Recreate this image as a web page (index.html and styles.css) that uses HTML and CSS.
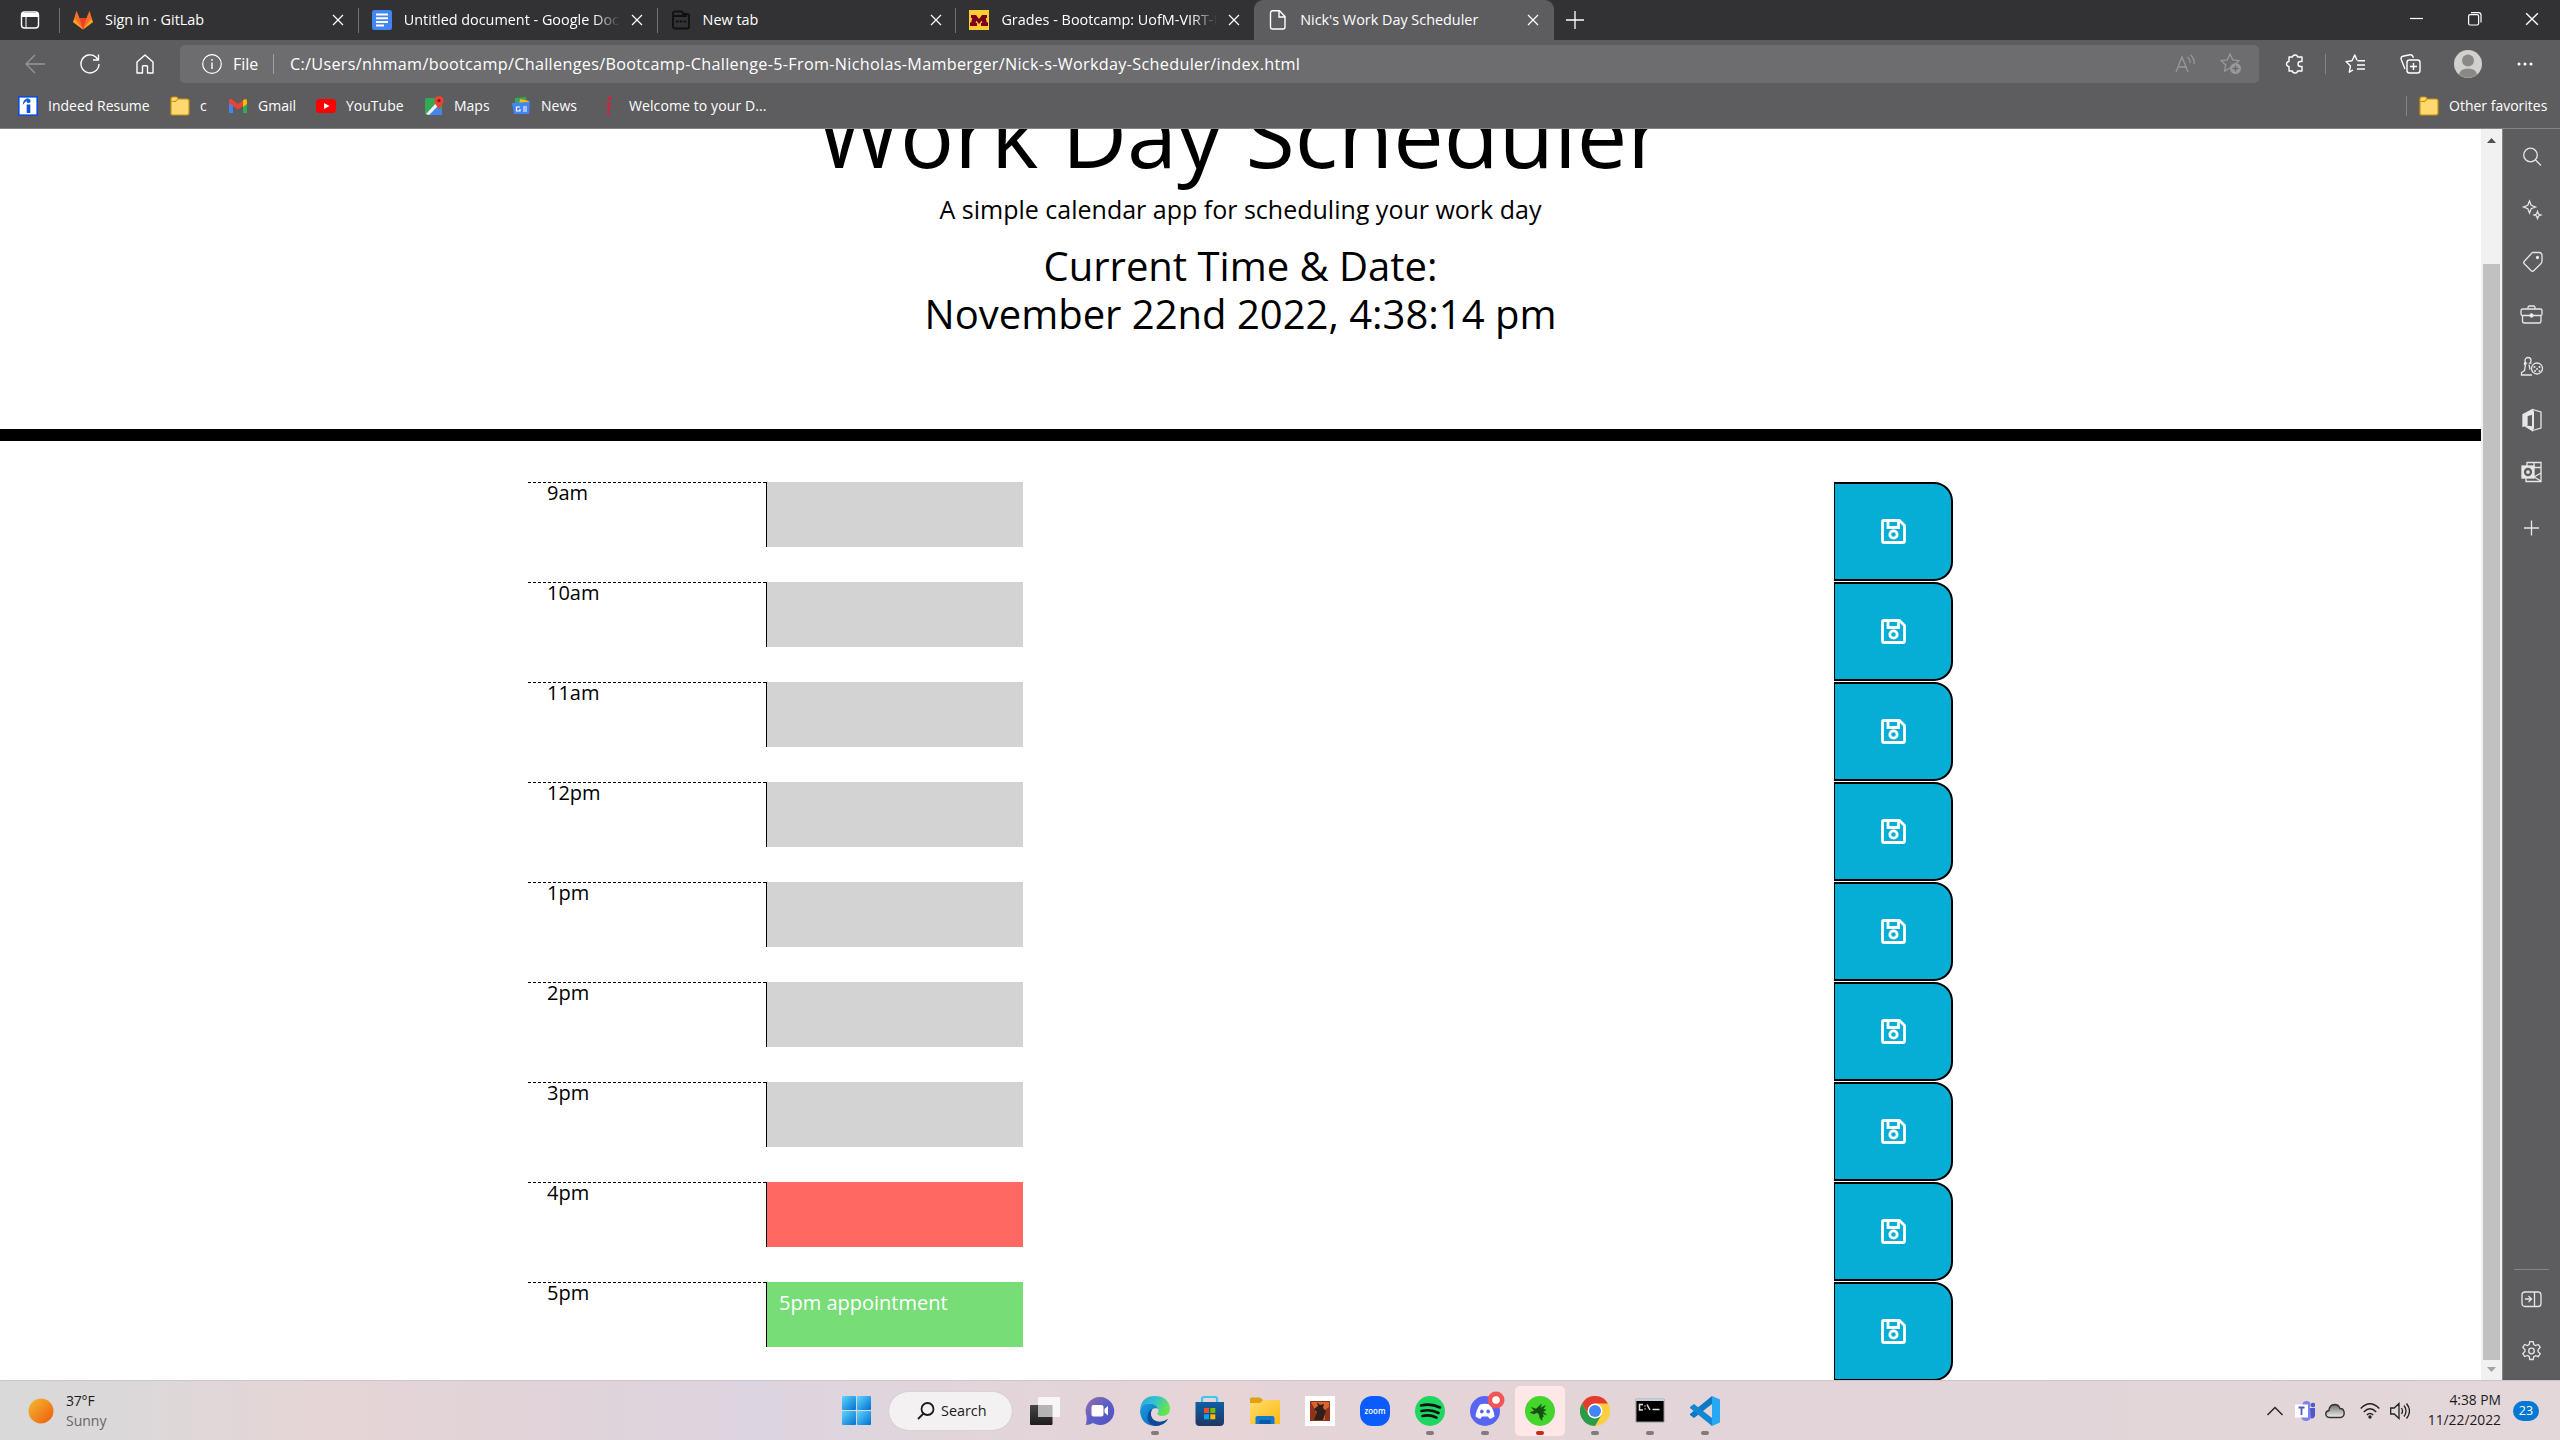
FILE: index.html
```html
<!DOCTYPE html>
<html lang="en">
<head>
<meta charset="utf-8">
<title>Nick's Work Day Scheduler</title>
<link rel="stylesheet" href="styles.css">
</head>
<body>
<svg class="defs" aria-hidden="true">
  <defs>
    <linearGradient id="win" x1="0" y1="0" x2="1" y2="1"><stop offset="0" stop-color="#5fd6ff"/><stop offset="1" stop-color="#0070d0"/></linearGradient>
    <linearGradient id="sun" x1="0" y1="0" x2="1" y2="1"><stop offset="0" stop-color="#f3bd32"/><stop offset="1" stop-color="#ee5a0c"/></linearGradient>
    <linearGradient id="dark" x1="0" y1="0" x2="0" y2="1"><stop offset="0" stop-color="#454545"/><stop offset="1" stop-color="#1d1d1d"/></linearGradient>
    <linearGradient id="chat" x1="0" y1="0" x2="1" y2="1"><stop offset="0" stop-color="#9a6fa8"/><stop offset=".5" stop-color="#5b5fc7"/><stop offset="1" stop-color="#5050c0"/></linearGradient>
    <linearGradient id="edgeTop" x1="0" y1="0" x2="1" y2=".4"><stop offset="0" stop-color="#28a5dc"/><stop offset=".5" stop-color="#2fc3cf"/><stop offset="1" stop-color="#66e54e"/></linearGradient>
    <linearGradient id="edgeLow" x1="0" y1="0" x2="1" y2="1"><stop offset="0" stop-color="#1b9de2"/><stop offset="1" stop-color="#0a5bb5"/></linearGradient>
    <linearGradient id="store" x1="0" y1="0" x2="0" y2="1"><stop offset="0" stop-color="#0f5fa5"/><stop offset="1" stop-color="#1f3763"/></linearGradient>
    <linearGradient id="folderBig" x1="0" y1="0" x2="1" y2="1"><stop offset="0" stop-color="#ffdc6b"/><stop offset="1" stop-color="#fdb913"/></linearGradient>
    <linearGradient id="cloud" x1="0" y1="0" x2="0" y2="1"><stop offset="0" stop-color="#6e6e6e"/><stop offset="1" stop-color="#efefef"/></linearGradient>
    <symbol id="x" viewBox="0 0 12 12"><path d="M1 1l10 10M11 1L1 11" stroke="#fff" stroke-width="1.2" fill="none"/></symbol>
    <symbol id="folder" viewBox="0 0 20 20"><path d="M1 18V3q0-2 2-2h3q2 0 2 2h9q2 0 2 2v12q0 2-2 2H3q-2 0-2-1z" fill="#ffd970" stroke="#c79312" stroke-width="1.2"/><path d="M1.5 5.500h4.500L8 3" fill="#f2bf2e" stroke="#c79312"/></symbol>
    <symbol id="save" viewBox="0 0 25 25"><path d="M3 1.500h15.500l5 5V22q0 1.500-1.500 1.500H3Q1.500 23.500 1.500 22V3Q1.500 1.500 3 1.500z" fill="none" stroke="#fff" stroke-width="2.800" stroke-linejoin="round"/><path d="M7 2v6.500h10.500V2" fill="none" stroke="#fff" stroke-width="2.800"/><circle cx="12.500" cy="15.500" r="3.700" fill="none" stroke="#fff" stroke-width="2.800"/></symbol>
  </defs>
</svg>

<header class="browser">
  <div class="tabstrip">
    <div class="tab-actions"><svg width="20" height="20" viewBox="0 0 20 20"><rect x="1.500" y="2" width="17" height="16" rx="3" fill="none" stroke="#fff" stroke-width="1.400"/><path d="M2 3h16v4H2z" fill="#fff"/><path d="M6 6v12" stroke="#fff"/></svg></div>
    <div class="tab">
      <svg class="fav" viewBox="0 0 20 20"><path d="M10 19.500L0 12 3.500.8 6.500 8h7L16.500.8 20 12z" fill="#fc6d26"/><path d="M10 19.500L6.500 8h7z" fill="#e24329"/><path d="M0 12l10 7.500L2 9zM20 12l-10 7.500L18 9z" fill="#fca326"/></svg>
      <span class="title">Sign in · GitLab</span><svg class="close"><use href="#x"/></svg>
    </div>
    <div class="tab">
      <svg class="fav" viewBox="0 0 20 20"><rect width="20" height="20" rx="2.500" fill="#4285f4"/><path d="M4 4.500h12M4 8.300h12M4 12h12M4 15.500h8" stroke="#fff" stroke-width="1.900"/></svg>
      <span class="title faded">Untitled document - Google Docs</span><svg class="close"><use href="#x"/></svg>
    </div>
    <div class="tab">
      <svg class="fav" viewBox="0 0 20 20"><path d="M4 1.500h6q2 0 2 2.500h4q2 0 2 2v10.500q0 2-2 2H4q-2 0-2-2V3.500q0-2 2-2zM2 6h14" fill="none" stroke="#101010" stroke-width="1.800"/><path d="M5 11.500h2.500m1.300 0h2.500m1.300 0h2.500" stroke="#101010" stroke-width="2.200"/></svg>
      <span class="title">New tab</span><svg class="close"><use href="#x"/></svg>
    </div>
    <div class="tab">
      <svg class="fav" viewBox="0 0 20 20"><rect width="20" height="20" fill="#ffcc33"/><path d="M2 5h5l3 4 3-4h5v3h-1.200l1 4.500H19V16h-7v-3h1.200L13 10.500 10 14l-3-3.500-.2 2.500H8v3H1v-3.500h1.200l1-4.500H2z" fill="#7a0019"/></svg>
      <span class="title faded">Grades - Bootcamp: UofM-VIRT-F</span><svg class="close"><use href="#x"/></svg>
    </div>
    <div class="tab active">
      <svg class="fav" viewBox="0 0 20 20"><path d="M4.500.8h7L17 6.500V17q0 2-2 2H4.500q-2 0-2-2V3q0-2.200 2-2.200zM11 1v6h6" fill="none" stroke="#fff" stroke-width="1.400"/></svg>
      <span class="title">Nick's Work Day Scheduler</span><svg class="close"><use href="#x"/></svg>
    </div>
    <svg class="newtab" viewBox="0 0 18 18"><path d="M9 0v18M0 9h18" stroke="#fff" stroke-width="1.300"/></svg>
    <div class="window-buttons">
      <svg width="14" height="14"><path d="M0 6.500h13" stroke="#fff" stroke-width="1.200"/></svg>
      <svg width="14" height="14"><rect x=".6" y="2.600" width="10" height="10.400" rx="1.500" fill="none" stroke="#fff" stroke-width="1.200"/><path d="M3 .6h7.500q2.500 0 2.500 2.500v7.500" fill="none" stroke="#fff" stroke-width="1.200"/></svg>
      <svg width="14" height="14" viewBox="0 0 12 12"><use href="#x"/></svg>
    </div>
  </div>

  <div class="toolbar">
    <svg class="nav-ico" viewBox="0 0 20 20"><path d="M20 10H1M10 1L1 10l9 9" fill="none" stroke="#98989a" stroke-width="1.300"/></svg>
    <svg class="nav-ico" viewBox="0 0 20 20"><path d="M19 10a9 9 0 1 1-3-6.800L18.500 6M18.500.5V6H13" fill="none" stroke="#fff" stroke-width="1.400"/></svg>
    <svg class="nav-ico" viewBox="0 0 20 20"><path d="M2 8l8-7 8 7v11h-5.500v-6.500q0-.8-.8-.8H8.300q-.8 0-.8.8V19H2z" fill="none" stroke="#fff" stroke-width="1.400" stroke-linejoin="round"/></svg>
    <div class="address">
      <svg width="20" height="20"><circle cx="10" cy="10" r="9.300" fill="none" stroke="#fff" stroke-width="1.200"/><path d="M10 8.500V15M10 5v1.700" stroke="#fff" stroke-width="1.400"/></svg>
      <span class="scheme">File</span>
      <span class="url">C:/Users/nhmam/bootcamp/Challenges/Bootcamp-Challenge-5-From-Nicholas-Mamberger/Nick-s-Workday-Scheduler/index.html</span>
      <svg class="read" width="20" height="20"><path d="M1 18L7 3l6 15M3.500 13h7M12.500 3q3 2.500 2.500 6M15.500 1q4.500 4 3.500 9" fill="none" stroke="#98989a" stroke-width="1.300"/></svg>
      <svg class="star" width="22" height="22"><path d="M10 1l2.700 5.800 6.300.8-4.700 4.300 1.200 6.300L10 15l-5.500 3.200 1.200-6.300L1 7.600l6.300-.8z" fill="none" stroke="#98989a" stroke-width="1.300"/><circle cx="15.500" cy="15.500" r="5.500" fill="#98989a"/><path d="M15.500 12.500v6M12.500 15.500h6" stroke="#666" stroke-width="1.300"/></svg>
    </div>
    <svg class="ext" width="20" height="20"><path d="M4 3h3.500a2.500 2 0 0 1 5 0H17v4.500h-1.500a2.500 2.500 0 0 0 0 5H17V17h-4.500a2.500 2 0 0 1-5 0H4v-4.500a2.500 2.500 0 0 1 0-5z" fill="none" stroke="#fff" stroke-width="1.400" stroke-linejoin="round"/></svg>
    <i class="rule"></i>
    <svg class="favs" width="20" height="20"><path d="M12 6.300L9.800 1 7 6.800l-6 .8 4.500 4.300-1.200 6.300L8 16M12.500 6.800H20M12 11h8M12 15h8" fill="none" stroke="#fff" stroke-width="1.400" stroke-linejoin="round"/></svg>
    <svg class="coll" width="21" height="20"><rect x="7" y="6" width="13" height="13" rx="2.500" fill="none" stroke="#fff" stroke-width="1.400"/><path d="M13.500 9v7M10 12.500h7M5 15L1.200 5.500Q.5 3 2.800 2.200L10 .8q2.500-.5 3 2l.3 1" fill="none" stroke="#fff" stroke-width="1.400"/></svg>
    <svg class="avatar" width="28" height="28"><circle cx="14" cy="14" r="14" fill="#d2d0ce"/><circle cx="14" cy="10.500" r="6" fill="#8a8886"/><path d="M5 24.500q1-6 9-6t9 6a14 14 0 0 1-18 0z" fill="#8a8886"/></svg>
    <svg class="dots" width="16" height="4"><circle cx="2" cy="2" r="1.500" fill="#fff"/><circle cx="8" cy="2" r="1.500" fill="#fff"/><circle cx="14" cy="2" r="1.500" fill="#fff"/></svg>
  </div>

  <nav class="bookmarks">
    <div class="bm b1"><svg viewBox="0 0 20 20"><rect x=".8" y=".8" width="18.400" height="18.400" fill="#fff" stroke="#0a4bd8" stroke-width="1.600"/><circle cx="10.500" cy="5" r="2.100" fill="#0a55d8"/><path d="M8.700 8.500h3.600v8.500H8.700zM4.500 9Q5 3 11 2" fill="#0a55d8"/></svg><span>Indeed Resume</span></div>
    <div class="bm b2"><svg><use href="#folder"/></svg><span>c</span></div>
    <div class="bm b3"><svg viewBox="0 0 20 20"><path d="M1 4v13h4V8z" fill="#4285f4"/><path d="M19 4v13h-4V8z" fill="#34a853"/><path d="M1 4q1-2 3-.5l6 4.500 6-4.500q2-1.500 3 .5v3l-9 6.500L1 7z" fill="#ea4335"/><path d="M15 4.500q4-3 4 1V8l-4 3z" fill="#fbbc04"/></svg><span>Gmail</span></div>
    <div class="bm b4"><svg viewBox="0 0 20 20"><rect y="3" width="20" height="14" rx="3.500" fill="#f00"/><path d="M8 7l5.500 3L8 13z" fill="#fff"/></svg><span>YouTube</span></div>
    <div class="bm b5"><svg viewBox="0 0 20 20"><rect x="1" y="2" width="17" height="17" rx="2" fill="#34a853"/><path d="M4 19L12 9l6 6v4z" fill="#4285f4"/><path d="M2 18L14 5l2 3L5 19z" fill="#f5f5f5"/><path d="M15 13q-5-5.500-4.500-9A4.500 4 0 0 1 19.500 4q.5 3.500-4.500 9z" fill="#ea4335"/><circle cx="15" cy="4.500" r="1.600" fill="#811"/></svg><span>Maps</span></div>
    <div class="bm b6"><svg viewBox="0 0 20 20"><path d="M4 2l11-1 1 7H4z" fill="#34a853"/><path d="M9 3l9 2-1 5H8z" fill="#fbbc04"/><path d="M1 7l16-1 2-1-1 13H3z" fill="#4285f4"/><path d="M9 11H5.500v4H9v-2M12 11h4m-4 2h4m-4 2h4" stroke="#fff" stroke-width="1.200" fill="none"/></svg><span>News</span></div>
    <div class="bm b7"><svg viewBox="0 0 20 20"><circle cx="12" cy="2.500" r="2" fill="#d5213d"/><path d="M8 8q4-2 3.500 1L9.500 17q0 1.500 2.500 0" fill="none" stroke="#d5213d" stroke-width="2"/></svg><span>Welcome to your D...</span></div>
    <div class="bm other"><svg><use href="#folder"/></svg><span>Other favorites</span></div>
  </nav>
</header>

<div class="viewport">
  <main class="page">
    <section class="jumbotron">
      <h1>Work Day Scheduler</h1>
      <p class="lead">A simple calendar app for scheduling your work day</p>
      <p class="clock">Current Time &amp; Date:<br>November 22nd 2022, 4:38:14 pm</p>
    </section>
    <section class="schedule">
      <div class="row"><div class="hour">9am</div><div class="slot"></div><button class="save"><svg><use href="#save"/></svg></button></div>
      <div class="row"><div class="hour">10am</div><div class="slot"></div><button class="save"><svg><use href="#save"/></svg></button></div>
      <div class="row"><div class="hour">11am</div><div class="slot"></div><button class="save"><svg><use href="#save"/></svg></button></div>
      <div class="row"><div class="hour">12pm</div><div class="slot"></div><button class="save"><svg><use href="#save"/></svg></button></div>
      <div class="row"><div class="hour">1pm</div><div class="slot"></div><button class="save"><svg><use href="#save"/></svg></button></div>
      <div class="row"><div class="hour">2pm</div><div class="slot"></div><button class="save"><svg><use href="#save"/></svg></button></div>
      <div class="row"><div class="hour">3pm</div><div class="slot"></div><button class="save"><svg><use href="#save"/></svg></button></div>
      <div class="row"><div class="hour">4pm</div><div class="slot present"></div><button class="save"><svg><use href="#save"/></svg></button></div>
      <div class="row"><div class="hour">5pm</div><div class="slot future">5pm appointment</div><button class="save"><svg><use href="#save"/></svg></button></div>
    </section>
  </main>
  <div class="scrollbar"><svg width="9" height="5"><path d="M0 5L4.500 0 9 5z" fill="#505050"/></svg><div class="thumb"></div><svg width="9" height="5"><path d="M0 0h9L4.500 5z" fill="#a3a3a3"/></svg></div>
  <aside class="sidebar">
    <svg viewBox="0 0 24 24"><circle cx="10.500" cy="10" r="6.800"/><path d="M15.500 15l5.500 5.500"/></svg>
    <svg viewBox="0 0 24 24"><path d="M9.500 3l1.700 4.300L15.500 9l-4.300 1.700L9.500 15l-1.700-4.300L3.500 9l4.300-1.700zM17.500 13.500l1 2.500 2.500 1-2.500 1-1 2.500-1-2.500-2.500-1 2.500-1z"/></svg>
    <svg viewBox="0 0 24 24"><path d="M12.500 2.500H19q3 0 3 3V11q0 1.500-1 2.500l-7 7q-1.500 1.500-3 0l-6.500-6.500q-1.500-1.500 0-3l6.500-7q.7-1 1.500-1.500z"/><circle cx="17.500" cy="7.500" r="1" fill="#e6e6e6"/></svg>
    <svg viewBox="0 0 24 24"><rect x="1" y="6" width="21" height="6.500" rx="1.500"/><path d="M2.500 12.500V18q0 2 2 2h14.500q2 0 2-2v-5.500M8 6V4.500Q8 3 9.500 3h4q1.500 0 1.500 1.500V6"/><circle cx="11.500" cy="12.500" r="1.500" fill="#fff"/></svg>
    <svg viewBox="0 0 24 24"><path d="M12 20H1.500v-2.500l3-2 1-6H4.500V8h1.500q-1-1-1-2.500a3 3 0 0 1 6 0Q11 7 10 8h1.500M9 9.500l1 5"/><circle cx="17" cy="13.500" r="5.500"/><path d="M14.500 12v.1M17 14v.1M19.500 12v.1M15 16v.1M19.500 16v.1" stroke-width="2" stroke-linecap="round"/></svg>
    <svg viewBox="0 0 24 24"><path d="M12.500 1.500L21 4v16l-8.500 2.500"/><path d="M3 6.500l9.500-5v4.500L7 7.500v9l-4 1.800zM5 18l7.500 1v3.500z" fill="#e6e6e6"/><path d="M13 3v18" stroke-width="2"/></svg>
    <svg viewBox="0 0 24 24"><path d="M7 6V2.500h14v19H6V18M14 7.500h7M21 13l-7 4 7 4M14 2v6"/><rect x="2" y="6" width="12" height="12" fill="#e6e6e6"/><circle cx="8" cy="12" r="3" stroke="#5d5d5f" stroke-width="2.300"/></svg>
    <svg class="plus" viewBox="0 0 24 24"><path d="M11.500 4.500v15M4 12h15"/></svg>
    <hr>
    <svg class="panel" viewBox="0 0 24 24"><rect x="2" y="5" width="19" height="14.500" rx="3"/><path d="M14.500 5v14.500M5 12h6M8.500 9l3 3-3 3"/></svg>
    <svg class="gear" viewBox="0 0 24 24"><path d="M9.700 5l.6-2.800h3.400l.6 2.800 1.800 1 2.700-1 1.900 3-2.100 2v2.100l2.100 2-1.900 3-2.700-1-1.800 1-.6 2.900h-3.400L9.700 17l-1.800-1-2.700 1-1.900-3 2.100-2V10l-2.100-2 1.900-3 2.700 1z" transform="translate(-.5 .5)"/><circle cx="11.500" cy="12" r="2.800"/></svg>
  </aside>
</div>

<footer class="taskbar">
  <div class="weather"><svg width="26" height="26"><circle cx="13" cy="13" r="12.500" fill="url(#sun)"/></svg><div class="stack"><span class="temp">37°F</span><span class="dim">Sunny</span></div></div>
  <div class="apps">
    <div class="start"><svg width="30" height="30"><g fill="url(#win)"><rect x="0" y="0" width="14" height="14" rx="1"/><rect x="15" y="0" width="14" height="14" rx="1"/><rect x="0" y="15" width="14" height="14" rx="1"/><rect x="15" y="15" width="14" height="14" rx="1"/></g></svg></div>
    <div class="search"><svg width="18" height="18"><circle cx="10.500" cy="7" r="6" fill="none" stroke="#1b1b1b" stroke-width="1.800"/><path d="M6.500 11.500L1 17" stroke="#1b1b1b" stroke-width="1.800"/></svg><span>Search</span></div>
    <div class="app"><svg viewBox="0 0 30 30"><rect y="9" width="22.500" height="20" rx="1" fill="url(#dark)"/><rect x="8" y="1" width="22" height="20" rx="1" fill="#fafafa" opacity=".88"/><path d="M8 9h14.500v12H8z" fill="#b4b4b4"/></svg></div>
    <div class="app"><svg viewBox="0 0 30 30"><path d="M15 1a14 14 0 1 1-7 26q-3 2-7.500 2Q2 27 1.500 20A14 14 0 0 1 15 1z" fill="url(#chat)"/><rect x="6.500" y="9" width="12" height="11.500" rx="2" fill="#fff"/><path d="M19.500 13l3.500-3v9.500l-3.500-3z" fill="#fff"/></svg></div>
    <div class="app run"><svg viewBox="0 0 30 30"><path d="M0 13Q2 0 15 0t15 12q0 8-8 8-5 0-4.500-3 2-2 0-5Q14 7 8 7.500 2 8.500 0 13z" fill="url(#edgeTop)"/><path d="M0 15Q1 8 8 7.500q7-.5 10 5-7-1.500-7.500 5.500 0 7 7.500 8 5.500 1 10-3-4 7-13 7Q1 29 0 15z" fill="url(#edgeLow)"/><path d="M12 13q-3 7 2 11 6 4 14-1-4 7-13 7-8-2-7.500-9 .5-6 4.500-8z" fill="#10499c"/></svg></div>
    <div class="app"><svg viewBox="0 0 30 30"><path d="M7 7V3q0-2 2-2h11q2 0 2 2v4" fill="none" stroke="#3ac8f5" stroke-width="2.200"/><path d="M.5 6H29v20q0 4-4 4H4.500q-4 0-4-4z" fill="url(#store)"/><path d="M9 12h5v5H9z" fill="#f25022"/><path d="M15.300 12h5v5h-5z" fill="#7fba00"/><path d="M9 18.300h5v5H9z" fill="#00a4ef"/><path d="M15.300 18.300h5v5h-5z" fill="#ffb900"/></svg></div>
    <div class="app"><svg viewBox="0 0 30 30"><path d="M0 8V3q0-1.500 1.500-1.500H10L13 4v4z" fill="#e0a00f"/><path d="M0 7h10l3-3h15.500Q30 4 30 5.500V28H0z" fill="url(#folderBig)"/><path d="M5.500 28v-6q0-2 2-2h15q2 0 2 2v6z" fill="#1479cd"/><path d="M9.500 28v-4h11v4z" fill="#075aa5"/></svg></div>
    <div class="app"><svg viewBox="0 0 30 30"><path d="M0 0h30v30H0z" fill="#fff"/><path d="M5 5h20v20H5z" fill="#913317"/><path d="M6 6h18v5l-4 3v10h-5z" fill="#dc6330"/><path d="M12 6l3 3 4-1-1 4 3 3-3 9H9l3-8-3-3 4-3z" fill="#30201b"/></svg></div>
    <div class="app"><svg viewBox="0 0 30 30"><rect width="30" height="30" rx="12" fill="#0b5cff"/><text x="15" y="17.500" text-anchor="middle" textLength="21" lengthAdjust="spacingAndGlyphs" class="zoomlogo">zoom</text></svg></div>
    <div class="app run"><svg viewBox="0 0 30 30"><circle cx="15" cy="15" r="15" fill="#1ed760"/><path d="M6 9.500q10-2.500 19 2M6.500 15q9.500-2.300 17 2M7.500 20q7.500-1.800 14 1.700" fill="none" stroke="#111" stroke-width="2.600" stroke-linecap="round"/></svg></div>
    <div class="app run"><svg viewBox="0 0 30 30" overflow="visible"><circle cx="15" cy="15" r="15" fill="#5865f2"/><path d="M10 8.500q5-1.500 10 0 4 5.500 4.500 12-3 2.300-5 2.300L18 20.500h-6l-1.500 2.300q-2 0-5-2.300Q6 14 10 8.500z" fill="#fff"/><ellipse cx="11.800" cy="15.500" rx="1.800" ry="2" fill="#5865f2"/><ellipse cx="18.200" cy="15.500" rx="1.800" ry="2" fill="#5865f2"/><circle cx="26" cy="4" r="8.500" fill="#f05656"/><circle cx="26" cy="4" r="3.800" fill="#fff"/></svg></div>
    <div class="app run current"><svg viewBox="0 0 30 30"><circle cx="15" cy="15" r="15" fill="#44d62c"/><path d="M5 16.500l4.500-1.500-3-3.500 4.500 1.500 5.500-5-1.500 4 5.500-2.500-2.500 3.500 3 1-3 1.500 3.500 3.500-4-1.500 1 3-1.500 1v3l-2-2.500-1-4-2-1.500-3 1.500z" fill="#174e12" stroke="#174e12" stroke-width=".5"/></svg></div>
    <div class="app run"><svg viewBox="0 0 30 30"><circle cx="15" cy="15" r="15" fill="#ffcd40"/><path d="M2 7.500A15 15 0 0 1 28 7.500H15L8.500 18.800z" fill="#e33b2e"/><path d="M2 7.500A15 15 0 0 0 15 30l6.500-11.300H8.500z" fill="#2a9a4b"/><circle cx="15" cy="15" r="7.500" fill="#fff"/><circle cx="15" cy="15" r="6" fill="#4285f4"/></svg></div>
    <div class="app run"><svg viewBox="0 0 30 30"><path d="M1 3h28v23H1z" fill="#000" stroke="#8d9296"/><path d="M1 2.500h28v2.500H1z" fill="#c7d0d8"/><path d="M8 8.500H4.500V14H8M10 9.500v1m0 2v1M12 8.500l3 5.500M17.500 13.500h7" stroke="#ddd" stroke-width="1.500" fill="none"/></svg></div>
    <div class="app run"><svg viewBox="0 0 30 30"><path d="M22 0v8L4 22l-4-3v-1z" fill="#0a79c4"/><path d="M22 30v-8L4 8l-4 3v1z" fill="#1288d4"/><path d="M22 0l8 3.500v23L22 30z" fill="#27a8f2"/></svg></div>
  </div>
  <div class="tray">
    <svg class="t1" width="16" height="10"><path d="M.5 9L8 1.500 15.500 9" fill="none" stroke="#222" stroke-width="1.400"/></svg>
    <svg class="t2" width="20" height="20"><circle cx="11.500" cy="4" r="4" fill="#7b83eb"/><circle cx="18" cy="4" r="2.300" fill="#5059c9"/><path d="M6 7h10v9q-1 4-5 4t-5-4z" fill="#7b83eb"/><path d="M15 7h5v8q-1 3-4 2.500z" fill="#5059c9"/><path d="M0 3.500h13v13H0z" fill="#fff"/><path d="M3.500 6.500h6M6.500 6.500V14" stroke="#5059c9" stroke-width="1.800"/></svg>
    <svg class="t3" width="20" height="20"><path d="M4.500 16.500Q.8 16 .8 13T4 9.500Q4.500 3.800 9.500 3.500q4 0 5.500 4 4 0 4.200 4.500 0 4-4 4.500z" fill="url(#cloud)" stroke="#333" stroke-width="1.400"/></svg>
    <svg class="t4" width="20" height="18"><path d="M.7 6.500q9.300-9.500 18.600 0M3.800 10q6.200-6.500 12.400 0M6.800 13q3.200-3 6.400 0" fill="none" stroke="#222" stroke-width="1.400"/><circle cx="10" cy="15" r="1.700" fill="#222"/></svg>
    <svg class="t5" width="20" height="18"><path d="M.7 6h3.500L9 1.500v15L4.200 12H.7zM11.500 6q2 3 0 6M14 3.500q4 5.500 0 11M16.500 1.500q6 7.500 0 15" fill="none" stroke="#222" stroke-width="1.300"/></svg>
    <div class="stack clocktext"><span>4:38 PM</span><span>11/22/2022</span></div>
    <div class="badge">23</div>
  </div>
</footer>
</body>
</html>
```
FILE: styles.css
```css
* { box-sizing: border-box; }
html, body { margin: 0; height: 100%; }
body {
  display: flex; flex-direction: column;
  width: 2560px; height: 1440px; overflow: hidden;
  font-family: "Open Sans", "Noto Sans", sans-serif; color: #000; background: #fff;
}
svg { display: block; flex: none; }
.defs { position: absolute; width: 0; height: 0; }

/* browser chrome */
.browser { flex: none; height: 129px; background: #5d5d5f; color: #fff; border-bottom: 1px solid #858587; font-size: 14.4px; }
.tabstrip { display: flex; height: 40px; background: #323234; }
.tab-actions { width: 59px; padding: 10px 0 0 20px; }
.tab { display: flex; align-items: center; width: 298.800px; padding-left: 14px; background: linear-gradient(#707072, #707072) 0 8px / 1px 25px no-repeat; }
.tab.active { background: #5d5d5f; width: 300px; border-radius: 9px 9px 0 0; }
.fav { width: 20px; height: 20px; margin-right: 12px; }
.title { width: 216px; overflow: hidden; white-space: nowrap; margin-right: 11px; line-height: 40px; }
.faded { -webkit-mask-image: linear-gradient(90deg, #000 88%, transparent); mask-image: linear-gradient(90deg, #000 88%, transparent); }
.close { width: 12px; height: 12px; }
.newtab { width: 18px; height: 18px; margin: 11px 0 0 12px; }
.window-buttons { display: flex; gap: 43.500px; margin: 12px 21px 0 auto; }

.toolbar { display: flex; align-items: center; height: 48px; padding-left: 25px; }
.nav-ico { width: 20px; height: 20px; margin-right: 35px; }
.address { display: flex; align-items: center; width: 2079px; height: 38px; margin-left: -10px; padding-left: 22px; background: #6d6d6f; border-radius: 5px; font-size: 16px; }
.scheme { width: 52px; margin-left: 11px; line-height: 20px; background: linear-gradient(#a0a0a2, #a0a0a2) 40px 0 / 1px 20px no-repeat; }
.url { flex: 1; margin-left: 5px; line-height: 20px; font-size: 16.200px; letter-spacing: .31px; white-space: nowrap; }
.read { margin-right: 25px; }
.star { margin-right: 17px; }
.ext { margin-left: 26px; }
.rule { width: 1px; height: 20px; margin-left: 20px; background: #858587; }
.favs { margin-left: 19px; }
.coll { margin-left: 35px; }
.avatar { margin-left: 33px; }
.dots { margin-left: 35px; }

.bookmarks { display: flex; align-items: center; height: 36px; font-size: 14px; }
.bm { display: flex; align-items: center; gap: 10px; line-height: 20px; padding-bottom: 1px; white-space: nowrap; }
.bm svg { width: 20px; height: 20px; }
.b1 { margin-left: 18px; width: 152px; } .b2 { width: 58px; } .b3 { width: 88px; }
.b4 { width: 108px; } .b5 { width: 87px; } .b6 { width: 87px; } .b7 { width: 180px; }
.bookmarks .b7 { gap: 11px; letter-spacing: .1px; }
.other { margin-left: auto; width: 154px; padding-left: 13px; background: linear-gradient(#858587, #858587) 0 0 / 1px 20px no-repeat; }

/* page */
.viewport { display: flex; height: 1251px; flex: none; }
.page { width: 2481px; overflow: hidden; }
.jumbotron { display: flow-root; height: 312px; border-bottom: 12px solid #000; text-align: center; }
.jumbotron h1 { margin: -50px 0 0; font-size: 90px; line-height: 108px; font-weight: 400; }
.lead { margin: 4px 0 0; font-size: 25px; line-height: 37px; }
.clock { margin: 14px 0 0; font-size: 40px; line-height: 48px; }
.schedule { width: 1425px; margin: 41px auto 0; font-size: 20px; }
.row { display: flex; height: 100px; align-items: flex-start; }
.hour { width: 238px; padding-left: 19px; border-top: 1px dashed #000; line-height: 20px; }
.slot { width: 257px; height: 65px; padding: 6px 12px; border-left: 1px solid #000; background: #d3d3d3; color: #fff; line-height: 30px; }
.present { background: #ff6961; }
.future { background: #77dd77; }
.save { display: flex; align-items: center; justify-content: center; width: 119px; height: 99px; margin-left: auto; padding: 0; background: #06aed5; border: 2px solid #000; border-left-width: 1px; border-radius: 0 19px 19px 0; }
.save svg { width: 25px; height: 25px; }

.scrollbar { display: flex; flex-direction: column; align-items: center; width: 21px; background: #f1f1f1; }
.scrollbar svg { margin-top: 9px; }
.thumb { width: 17px; height: 1096px; margin: 121px 0 -2px; background: #c1c1c1; }
.sidebar { display: flex; flex-direction: column; align-items: center; width: 58px; padding-top: 16px; border-left: 1px solid #858587; background: #5d5d5f; }
.sidebar svg { width: 24px; height: 24px; margin-bottom: 28.500px; fill: none; stroke: #e6e6e6; stroke-width: 1.300; }
.sidebar .plus { margin-top: 3px; margin-bottom: 0; }
.sidebar hr { width: 35px; height: 1px; margin: auto 0 17px; border: 0; background: #858587; }
.sidebar .gear { margin-bottom: 17px; }

/* taskbar */
.taskbar { display: flex; height: 60px; flex: none; border-top: 1px solid #cdc3c8; color: #1b1b1b; font-size: 14px;
  background: linear-gradient(90deg, #d9d9da 0, #dcd8d9 140px, #e5d5d6 320px, #e2d3d8 500px, #dcd4df 750px, #e0d5dc 900px, #e6d4d7 1200px, #e2d4d8 1700px, #e3d7da 2560px); }
.weather { display: flex; align-items: center; gap: 12px; width: 842px; padding-left: 28px; }
.stack { display: flex; flex-direction: column; line-height: 20px; }
.temp { letter-spacing: -.2px; }
.dim { color: #666; }
.apps { display: flex; align-items: center; }
.start { width: 47px; }
.search { display: flex; align-items: center; gap: 6px; width: 123px; height: 38px; padding-left: 28px; margin-right: 5px; border-radius: 19px; background: #f4f1f2; box-shadow: 0 0 1px #aaa; font-size: 14.400px; }
.app { display: flex; align-items: center; justify-content: center; width: 50px; height: 50px; margin-right: 5px; border-radius: 5px; }
.app:nth-child(3) { margin-left: 3px; }
.app svg { width: 30px; height: 30px; }
.run { position: relative; }
.run::after { content: ""; position: absolute; left: 21px; top: 45px; width: 8px; height: 4px; border-radius: 2px; background: #837a7d; }
.current { background: #ffe6e7; }
.current::after { background: #c42b1c; }
.zoomlogo { font: 600 8.500px "Open Sans", sans-serif; fill: #fff; }
.tray { display: flex; align-items: center; margin-left: auto; padding-right: 21px; }
.t2 { margin-left: 12px; } .t3 { margin-left: 10px; } .t4 { margin-left: 15px; } .t5 { margin-left: 10px; }
.clocktext { width: 91px; align-items: flex-end; margin-top: -1px; font-size: 13.800px; }
.badge { width: 26px; height: 20px; margin-left: 12px; border-radius: 10px; background: #0078d4; color: #fff; line-height: 20px; text-align: center; font-size: 12.500px; }
```
